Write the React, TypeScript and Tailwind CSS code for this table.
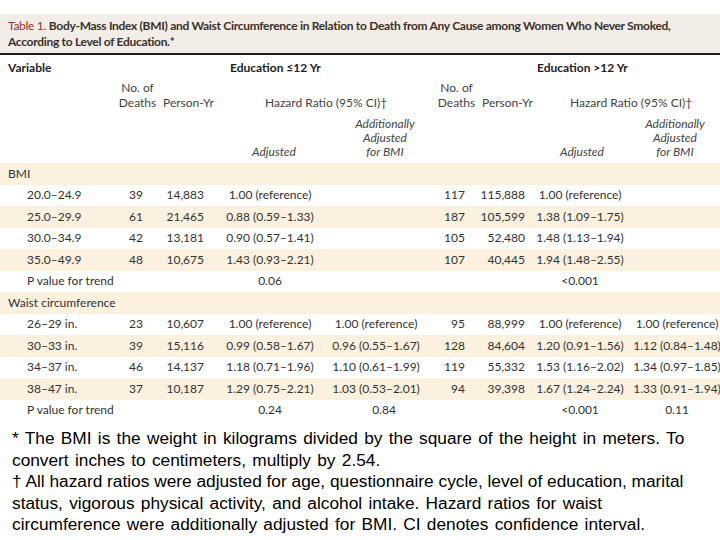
import React from "react";

type Row = {
    label: string;
    kind: "section" | "item" | "trend";
    d1?: string;
    p1?: string;
    a1?: string;
    b1?: string;
    d2?: string;
    p2?: string;
    a2?: string;
    b2?: string;
};

const rows: Row[] = [
    { label: "BMI", kind: "section" },
    { label: "20.0–24.9", kind: "item", d1: "39", p1: "14,883", a1: "1.00 (reference)", d2: "117", p2: "115,888", a2: "1.00 (reference)" },
    { label: "25.0–29.9", kind: "item", d1: "61", p1: "21,465", a1: "0.88 (0.59–1.33)", d2: "187", p2: "105,599", a2: "1.38 (1.09–1.75)" },
    { label: "30.0–34.9", kind: "item", d1: "42", p1: "13,181", a1: "0.90 (0.57–1.41)", d2: "105", p2: "52,480", a2: "1.48 (1.13–1.94)" },
    { label: "35.0–49.9", kind: "item", d1: "48", p1: "10,675", a1: "1.43 (0.93–2.21)", d2: "107", p2: "40,445", a2: "1.94 (1.48–2.55)" },
    { label: "P value for trend", kind: "trend", a1: "0.06", a2: "<0.001" },
    { label: "Waist circumference", kind: "section" },
    { label: "26–29 in.", kind: "item", d1: "23", p1: "10,607", a1: "1.00 (reference)", b1: "1.00 (reference)", d2: "95", p2: "88,999", a2: "1.00 (reference)", b2: "1.00 (reference)" },
    { label: "30–33 in.", kind: "item", d1: "39", p1: "15,116", a1: "0.99 (0.58–1.67)", b1: "0.96 (0.55–1.67)", d2: "128", p2: "84,604", a2: "1.20 (0.91–1.56)", b2: "1.12 (0.84–1.48)" },
    { label: "34–37 in.", kind: "item", d1: "46", p1: "14,137", a1: "1.18 (0.71–1.96)", b1: "1.10 (0.61–1.99)", d2: "119", p2: "55,332", a2: "1.53 (1.16–2.02)", b2: "1.34 (0.97–1.85)" },
    { label: "38–47 in.", kind: "item", d1: "37", p1: "10,187", a1: "1.29 (0.75–2.21)", b1: "1.03 (0.53–2.01)", d2: "94", p2: "39,398", a2: "1.67 (1.24–2.24)", b2: "1.33 (0.91–1.94)" },
    { label: "P value for trend", kind: "trend", a1: "0.24", b1: "0.84", a2: "<0.001", b2: "0.11" },
];

// footnote lines break where the original breaks them
const notes = [
    { text: "* The BMI is the weight in kilograms divided by the square of the height in meters. To", cls: "[word-spacing:1.5px]" },
    { text: "convert inches to centimeters, multiply by 2.54.", cls: "[word-spacing:1.5px]" },
    { text: "† All hazard ratios were adjusted for age, questionnaire cycle, level of education, marital", cls: "" },
    { text: "status, vigorous physical activity, and alcohol intake. Hazard ratios for waist", cls: "[word-spacing:1.5px]" },
    { text: "circumference were additionally adjusted for BMI. CI denotes confidence interval.", cls: "[word-spacing:1.5px]" },
];

function AdjHeader() {
    return (
        <div className="italic leading-[14px] text-center">
            <div>Additionally</div>
            <div>Adjusted</div>
            <div>for BMI</div>
        </div>
    );
}

export default function App() {
    return (
        <div className="w-[720px] h-[540px] bg-white overflow-hidden text-[#2b2b2b]">
            <div className="pt-[14px] font-['Lato',sans-serif]">
                {/* title band */}
                <div className="bg-[#f2ede7] h-[39px] pl-[8px] pt-[4px] text-[12px] tracking-[-0.3px] leading-[16px] font-bold text-[#3a302b] whitespace-nowrap">
                    <div>
                        <span className="font-normal text-[#8e3524]">Table 1. </span>
                        Body-Mass Index (BMI) and Waist Circumference in Relation to Death from Any Cause among Women Who Never Smoked,
                    </div>
                    <div>According to Level of Education.*</div>
                </div>
                <div className="h-[2px] bg-[#1e1e1e]" />

                {/* column heads */}
                <div className="h-[108px] text-[12px] pt-[5px] whitespace-nowrap">
                    <div className="flex h-[15px] leading-[15px] font-bold text-[#222]">
                        <div className="w-[230px] pl-[8px]">Variable</div>
                        <div className="w-[307px]">Education ≤12 Yr</div>
                        <div>Education &gt;12 Yr</div>
                    </div>
                    <div className="flex items-end mt-[5px] leading-[15px] text-[#444]">
                        <div className="w-[115px]" />
                        <div className="w-[45px] text-center">No. of<br />Deaths</div>
                        <div className="w-[105px] pl-[3px]">Person-Yr</div>
                        <div className="w-[169px]">Hazard Ratio (95% CI)†</div>
                        <div className="w-[45px] text-center">No. of<br />Deaths</div>
                        <div className="w-[91px] pl-[3px]">Person-Yr</div>
                        <div>Hazard Ratio (95% CI)†</div>
                    </div>
                    <div className="flex items-end mt-[7px] text-[#444]">
                        <div className="w-[208px]" />
                        <div className="w-[132px] text-center italic leading-[14px]">Adjusted</div>
                        <div className="w-[90px]"><AdjHeader /></div>
                        <div className="w-[97px]" />
                        <div className="w-[110px] text-center italic leading-[14px]">Adjusted</div>
                        <div className="w-[76px]"><AdjHeader /></div>
                    </div>
                </div>

                {/* body */}
                <div className="text-[12px] text-[#333]">
                    {rows.map((r, i) => (
                        <div
                            key={i}
                            className={`flex items-center h-[21.5px] whitespace-nowrap ${i % 2 === 0 ? "bg-[#fcf0df]" : "bg-white"}`}
                        >
                            <div className={`w-[115px] ${r.kind === "section" ? "pl-[8px]" : "pl-[27px]"}`}>{r.label}</div>
                            <div className="w-[28px] text-right">{r.d1}</div>
                            <div className="w-[61px] text-right">{r.p1}</div>
                            <div className="w-[132px] flex justify-center">{r.a1}</div>
                            <div className={`w-[80px] flex justify-center ${r.kind === "trend" ? "pl-[16px]" : ""}`}>{r.b1}</div>
                            <div className="w-[49px] text-right">{r.d2}</div>
                            <div className="w-[60px] text-right">{r.p2}</div>
                            <div className="w-[110px] flex justify-center">{r.a2}</div>
                            <div className="w-[84px] flex justify-center">{r.b2}</div>
                        </div>
                    ))}
                </div>
            </div>

            {/* footnotes */}
            <div className="mt-[7px] pl-[12px] font-['Liberation_Sans',Arial,sans-serif] text-[17.3px] leading-[21.5px] text-black whitespace-nowrap">
                {notes.map((n, i) => (
                    <div key={i} className={n.cls}>{n.text}</div>
                ))}
            </div>
        </div>
    );
}
